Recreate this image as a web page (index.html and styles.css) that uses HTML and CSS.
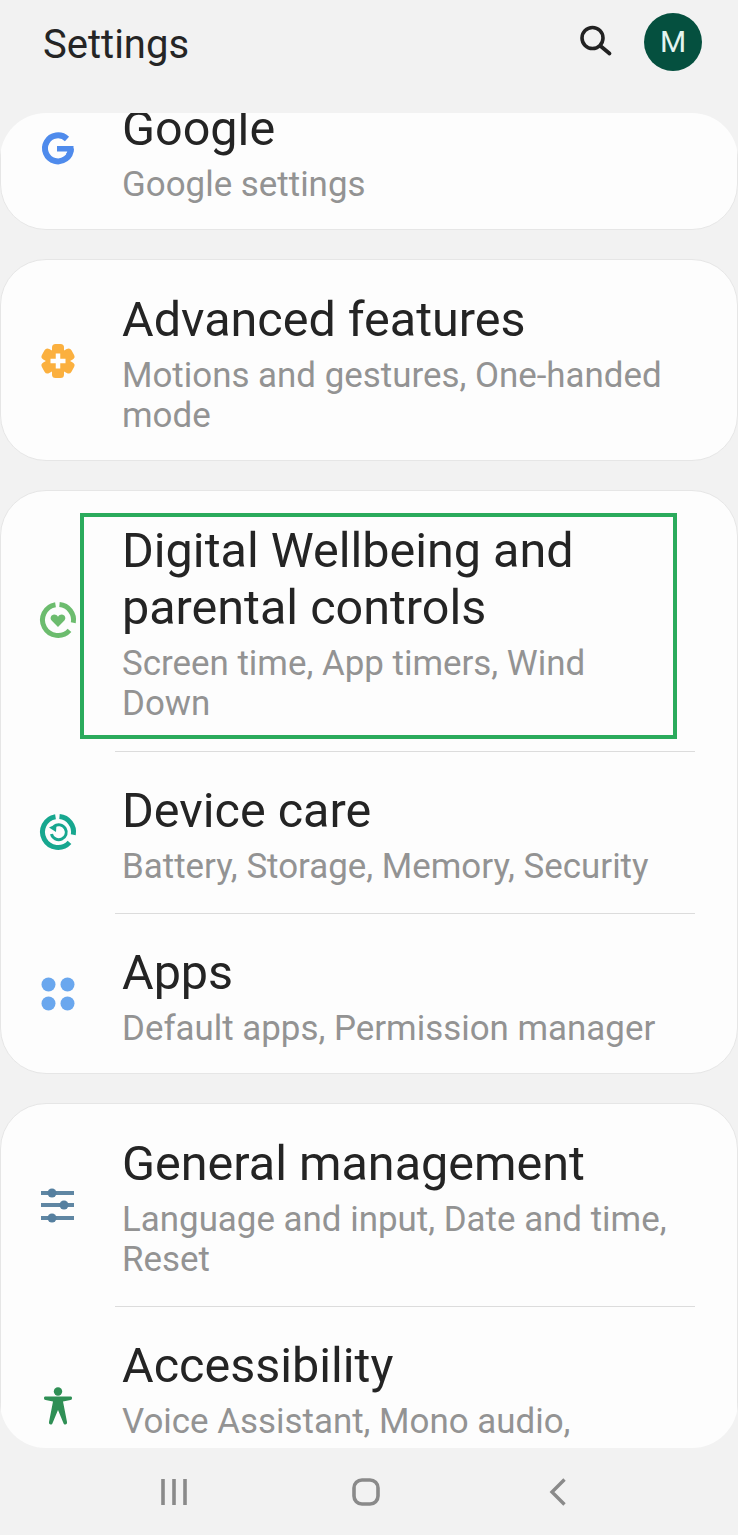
FILE: index.html
```html
<!DOCTYPE html>
<html lang="en">
<head>
    <meta charset="UTF-8">
    <meta name="viewport" content="width=device-width, initial-scale=1.0">
    <title>Settings</title>
    <link rel="stylesheet" href="styles.css">
</head>
<body>
    <header class="top-bar">
        <h1>Settings</h1>
        <svg class="search-icon" width="36" height="36" viewBox="0 0 36 36">
            <circle cx="15.5" cy="16" r="10.5" fill="none" stroke="#222" stroke-width="3.6"/>
            <path d="M23.5 24 L32.5 31.5" fill="none" stroke="#222" stroke-width="3.8" stroke-linecap="round"/>
        </svg>
        <div class="avatar">M</div>
    </header>

    <main class="scroller">
        <section class="card card-first">
            <div class="row">
                <svg class="icon" viewBox="0 0 40 40">
                    <path d="M29 9 A13 13 0 1 0 33 18.5" fill="none" stroke="#4f8bec" stroke-width="6"/>
                    <path d="M19 16 H35.5 V19 C35.5 21 35 23 34.3 24 H28 L29.5 21.5 H19 Z" fill="#4f8bec"/>
                </svg>
                <div class="text">
                    <div class="title">Google</div>
                    <div class="sub">Google settings</div>
                </div>
            </div>
        </section>

        <section class="card">
            <div class="row">
                <svg class="icon" viewBox="0 0 40 40">
                    <g fill="#fbb03f">
                        <rect x="14" y="3" width="12" height="34" rx="3.5"/>
                        <rect x="14" y="3" width="12" height="34" rx="3.5" transform="rotate(60 20 20)"/>
                        <rect x="14" y="3" width="12" height="34" rx="3.5" transform="rotate(120 20 20)"/>
                        <circle cx="20" cy="20" r="12"/>
                    </g>
                    <path d="M20 12.5 V27.5 M12.5 20 H27.5" stroke="#fff" stroke-width="4.5" fill="none"/>
                </svg>
                <div class="text">
                    <div class="title">Advanced features</div>
                    <div class="sub">Motions and gestures, One-handed mode</div>
                </div>
            </div>
        </section>

        <section class="card">
            <div class="row row-tall">
                <div class="highlight"></div>
                <svg class="icon" viewBox="0 0 40 40">
                    <g fill="none" stroke="#6cbc6e" stroke-width="5">
                        <path d="M17.5 4.7 A15.5 15.5 0 1 0 31.5 30.4"/>
                        <path d="M21.5 4.6 A15.5 15.5 0 0 1 35.3 22.7"/>
                    </g>
                    <path d="M20 27 L13.6 20.6 C11.6 18.4 13 14.6 16.2 14.6 C17.8 14.6 19.2 15.5 20 16.8 C20.8 15.5 22.2 14.6 23.8 14.6 C27 14.6 28.4 18.4 26.4 20.6 Z" fill="#6cbc6e"/>
                </svg>
                <div class="text">
                    <div class="title">Digital Wellbeing and parental controls</div>
                    <div class="sub">Screen time, App timers, Wind Down</div>
                </div>
            </div>
            <hr class="divider">
            <div class="row">
                <svg class="icon" viewBox="0 0 40 40">
                    <g fill="none" stroke="#17a78f" stroke-width="5">
                        <path d="M17.5 4.7 A15.5 15.5 0 1 0 31.5 30.4"/>
                        <path d="M21.5 4.6 A15.5 15.5 0 0 1 35.3 22.7"/>
                    </g>
                    <path d="M16 14.5 A7.5 7.5 0 1 1 13.5 22" fill="none" stroke="#17a78f" stroke-width="3"/>
                    <path d="M11 15.5 L18.5 12 L18 20 Z" fill="#17a78f"/>
                </svg>
                <div class="text">
                    <div class="title">Device care</div>
                    <div class="sub">Battery, Storage, Memory, Security</div>
                </div>
            </div>
            <hr class="divider">
            <div class="row">
                <svg class="icon" viewBox="0 0 40 40">
                    <g fill="#6aa7ee">
                        <circle cx="10.5" cy="10.5" r="7"/>
                        <circle cx="29.5" cy="10.5" r="7"/>
                        <circle cx="10.5" cy="29.5" r="7"/>
                        <circle cx="29.5" cy="29.5" r="7"/>
                    </g>
                </svg>
                <div class="text">
                    <div class="title">Apps</div>
                    <div class="sub">Default apps, Permission manager</div>
                </div>
            </div>
        </section>

        <section class="card">
            <div class="row">
                <svg class="icon" viewBox="0 0 40 40">
                    <path d="M3 8 H36 M3 20 H36 M3 33 H36" stroke="#5f86a3" stroke-width="4" fill="none"/>
                    <g fill="#557f9f">
                        <circle cx="14" cy="8" r="4.5"/>
                        <circle cx="26" cy="20" r="4.5"/>
                        <circle cx="14" cy="33" r="4.5"/>
                    </g>
                </svg>
                <div class="text">
                    <div class="title">General management</div>
                    <div class="sub">Language and input, Date and time, Reset</div>
                </div>
            </div>
            <hr class="divider">
            <div class="row">
                <svg class="icon" viewBox="0 0 40 40">
                    <circle cx="20" cy="4.5" r="4.2" fill="#2f8f55"/>
                    <path d="M6 11 C6 10 6.5 9.5 7.5 9.5 H32.5 C33.5 9.5 34 10 34 11 C34 12.3 33.5 13 32.5 13 L25 14.5 L29 35 C29.3 36.5 28.5 37.5 27.3 37.5 C26.3 37.5 25.8 37 25.4 36 L20 23 L14.6 36 C14.2 37 13.7 37.5 12.7 37.5 C11.5 37.5 10.7 36.5 11 35 L15 14.5 L7.5 13 C6.5 13 6 12.3 6 11 Z" fill="#2f8f55"/>
                </svg>
                <div class="text">
                    <div class="title">Accessibility</div>
                    <div class="sub">Voice Assistant, Mono audio, Assistant menu</div>
                </div>
            </div>
        </section>
    </main>

    <nav class="nav-bar">
        <svg width="26" height="28" viewBox="0 0 26 28">
            <path d="M2 1 V27 M13 1 V27 M24 1 V27" stroke="#8a8a8a" stroke-width="3.6" fill="none"/>
        </svg>
        <svg width="30" height="28" viewBox="0 0 30 28">
            <rect x="3" y="2" width="24" height="24" rx="8" fill="none" stroke="#8a8a8a" stroke-width="3.6"/>
        </svg>
        <svg width="22" height="28" viewBox="0 0 22 28">
            <path d="M19.5 1.5 L7 14 L19.5 26.5" stroke="#8a8a8a" stroke-width="3.4" fill="none"/>
        </svg>
    </nav>
</body>
</html>
```

FILE: styles.css
```css
body {
    margin: 0;
    height: 1535px;
    overflow: hidden;
    background-color: #f2f2f2;
    font-family: Roboto, "Liberation Sans", sans-serif;
}
.top-bar {
    height: 113px;
    display: flex;
    align-items: flex-start;
    box-sizing: border-box;
    padding: 13px 36px 0 43px;
}
.top-bar h1 {
    flex: 1;
    margin: 8px 0 0;
    font-size: 40px;
    line-height: 48px;
    font-weight: 400;
    color: #252525;
}
.search-icon {
    margin: 9px 31px 0 0;
}
.avatar {
    width: 58px;
    height: 58px;
    border-radius: 50%;
    background-color: #05503f;
    color: #e4f5f0;
    font-size: 30px;
    line-height: 58px;
    text-align: center;
}
.scroller {
    height: 1335px;
    overflow: hidden;
    border-radius: 46px;
}
.card {
    position: relative;
    background-color: #fdfdfd;
    border: 1px solid #e6e6e6;
    border-radius: 46px;
    margin-bottom: 29px;
}
.card-first {
    margin-top: -45px;
}
.row {
    position: relative;
    display: flex;
    align-items: center;
    padding: 30px 0 26px 37px;
}
.row:first-child {
    padding-top: 31px;
}
.row:last-child {
    padding-bottom: 24px;
}
.row-tall {
    padding-bottom: 27px;
}
.icon {
    flex: none;
    width: 40px;
    height: 40px;
    margin: -6px 44px 0 0;
}
.text {
    width: 552px;
}
.title {
    font-size: 48.5px;
    line-height: 57px;
    color: #242424;
}
.sub {
    margin-top: 8px;
    font-size: 34.9px;
    line-height: 40px;
    color: #939393;
}
.divider {
    margin: 0 42px 0 114px;
    border: none;
    border-top: 1px solid #dcdcdc;
}
.highlight {
    position: absolute;
    left: 79px;
    top: 22px;
    width: 589px;
    height: 218px;
    border: 4px solid #2bab5c;
}
.nav-bar {
    height: 87px;
    display: flex;
    align-items: flex-start;
    box-sizing: border-box;
    padding: 30px 0 0 161px;
    gap: 164px;
}
```
